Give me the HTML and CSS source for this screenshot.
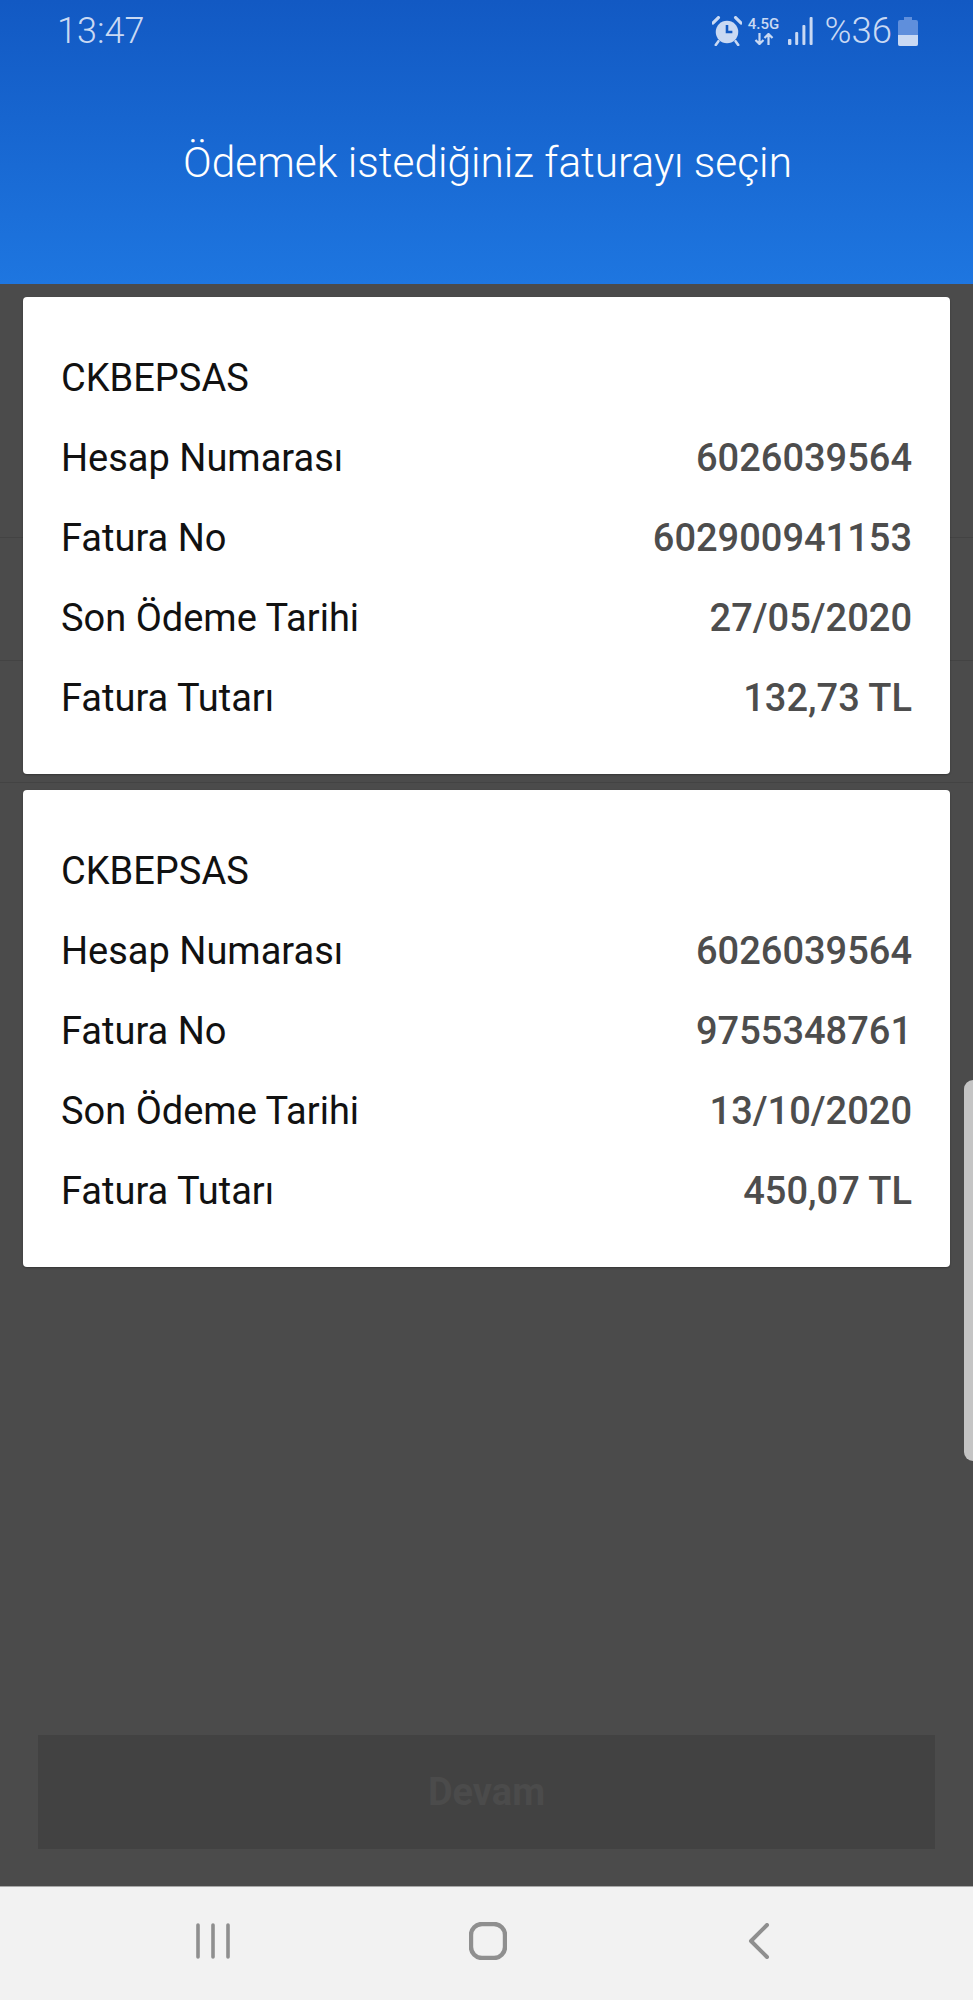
FILE: index.html
```html
<!DOCTYPE html>
<html lang="tr">
<head>
    <meta charset="UTF-8">
    <meta name="viewport" content="width=device-width, initial-scale=1.0">
    <title>Fatura Seçimi</title>
    <link rel="stylesheet" href="styles.css">
</head>
<body>
    <div class="screen">
        <header class="top-bar">
            <div class="status-bar">
                <span class="clock">13:47</span>
                <div class="status-icons">
                    <svg class="icon-alarm" width="30" height="30" viewBox="0 0 28 28">
                        <circle cx="14" cy="15" r="10.5" fill="#c9d9f3"/>
                        <path d="M14 8.5 V15 H19" fill="none" stroke="#1259c3" stroke-width="2.4"/>
                        <path d="M1 6.5 L6 1.5 M27 6.5 L22 1.5" stroke="#c9d9f3" stroke-width="3" stroke-linecap="round"/>
                        <path d="M6 23.5 L3.5 27 M22 23.5 L24.5 27" stroke="#c9d9f3" stroke-width="2.4" stroke-linecap="round"/>
                    </svg>
                    <div class="network">
                        <span class="network-label">4.5G</span>
                        <svg width="20" height="12" viewBox="0 0 20 12">
                            <path d="M5.5 0 V11 M1.5 7 L5.5 11 L9.5 7 M14.5 12 V1 M10.5 5 L14.5 1 L18.5 5" fill="none" stroke="#c9d9f3" stroke-width="2.2"/>
                        </svg>
                    </div>
                    <svg class="icon-signal" width="25" height="28" viewBox="0 0 25 28">
                        <rect x="0" y="22" width="3.4" height="6" rx="1" fill="#c9d9f3"/>
                        <rect x="7.2" y="15" width="3" height="13" rx="1" fill="#c9d9f3"/>
                        <rect x="14.4" y="8" width="3" height="20" rx="1" fill="#c9d9f3"/>
                        <rect x="21.6" y="0" width="3" height="28" rx="1" fill="#c9d9f3"/>
                    </svg>
                    <span class="battery-text">%36</span>
                    <svg class="icon-battery" width="20" height="29" viewBox="0 0 20 29">
                        <path d="M6 0 H14 V3 H18 Q20 3 20 5 V27 Q20 29 18 29 H2 Q0 29 0 27 V5 Q0 3 2 3 H6 Z" fill="#5f8fdc"/>
                        <path d="M0 18 H20 V27 Q20 29 18 29 H2 Q0 29 0 27 Z" fill="#c9d9f3"/>
                    </svg>
                </div>
            </div>
            <h1 class="page-title">Ödemek istediğiniz faturayı seçin</h1>
        </header>

        <main class="content">
            <div class="invoice-list">
                <section class="invoice-card">
                    <div class="invoice-row">CKBEPSAS</div>
                    <div class="invoice-row"><span>Hesap Numarası</span><span class="value">6026039564</span></div>
                    <div class="invoice-row"><span>Fatura No</span><span class="value">602900941153</span></div>
                    <div class="invoice-row"><span>Son Ödeme Tarihi</span><span class="value">27/05/2020</span></div>
                    <div class="invoice-row"><span>Fatura Tutarı</span><span class="value">132,73 TL</span></div>
                </section>
                <section class="invoice-card">
                    <div class="invoice-row">CKBEPSAS</div>
                    <div class="invoice-row"><span>Hesap Numarası</span><span class="value">6026039564</span></div>
                    <div class="invoice-row"><span>Fatura No</span><span class="value">9755348761</span></div>
                    <div class="invoice-row"><span>Son Ödeme Tarihi</span><span class="value">13/10/2020</span></div>
                    <div class="invoice-row"><span>Fatura Tutarı</span><span class="value">450,07 TL</span></div>
                </section>
            </div>
            <button class="continue-button" disabled>Devam</button>
            <div class="scroll-handle"></div>
        </main>

        <nav class="nav-bar">
            <svg width="34" height="36" viewBox="0 0 34 36">
                <path d="M2 2 V34 M17 2 V34 M32 2 V34" fill="none" stroke="#8f8f8f" stroke-width="3.6" stroke-linecap="round"/>
            </svg>
            <svg width="38" height="38" viewBox="0 0 38 38">
                <rect x="2" y="2" width="34" height="34" rx="11" fill="none" stroke="#8f8f8f" stroke-width="4.4"/>
            </svg>
            <svg width="24" height="36" viewBox="0 0 24 36">
                <path d="M21 2 L5 18 L21 34" fill="none" stroke="#8f8f8f" stroke-width="4" stroke-linecap="round" stroke-linejoin="round"/>
            </svg>
        </nav>
    </div>
</body>
</html>
```

FILE: styles.css
```css
* {
    box-sizing: border-box;
}
body {
    margin: 0;
    font-family: Roboto, "Liberation Sans", sans-serif;
}
.screen {
    display: flex;
    flex-direction: column;
    width: 973px;
    height: 2000px;
    overflow: hidden;
    background: #4b4b4b;
}
.top-bar {
    height: 284px;
    padding: 10px 55px 0 57px;
    background: linear-gradient(#1259c3, #1e76e0);
}
.status-bar {
    display: flex;
    justify-content: space-between;
    align-items: center;
    height: 42px;
    color: #c9d9f3;
}
.clock {
    font-size: 36px;
    font-weight: 300;
}
.status-icons {
    display: flex;
    align-items: center;
    gap: 6px;
}
.network {
    display: flex;
    flex-direction: column;
    align-items: center;
    gap: 3px;
    width: 32px;
}
.network-label {
    font-size: 15px;
    line-height: 12px;
    font-weight: 500;
}
.icon-signal {
    margin: 0 6px 0 2px;
}
.battery-text {
    font-size: 36.5px;
    font-weight: 300;
    line-height: 42px;
}
.page-title {
    margin: 83px 0 0;
    color: #fff;
    font-size: 42.4px;
    font-weight: 300;
    line-height: 56px;
    text-align: center;
}
.content {
    position: relative;
    flex: 1;
    display: flex;
    flex-direction: column;
    justify-content: space-between;
    padding: 13px 0 37px;
    background:
        linear-gradient(#434343, #434343) 0 253px / 100% 1px no-repeat,
        linear-gradient(#434343, #434343) 0 376px / 100% 1px no-repeat,
        linear-gradient(#434343, #434343) 0 498px / 100% 1px no-repeat;
}
.invoice-list {
    display: flex;
    flex-direction: column;
    gap: 16px;
    padding: 0 23px;
}
.invoice-card {
    height: 477px;
    padding: 41px 38px 36px 38px;
    background: #fff;
    border-radius: 4px;
    box-shadow: 0 1px 2px rgba(0, 0, 0, 0.3);
}
.invoice-row {
    display: flex;
    justify-content: space-between;
    align-items: center;
    height: 80px;
    color: #111;
    font-size: 38px;
}
.value {
    color: #4d4d4d;
    font-weight: 500;
}
.continue-button {
    align-self: center;
    width: 897px;
    height: 114px;
    border: none;
    background: #424242;
    color: #4b4b4b;
    font-family: inherit;
    font-size: 38px;
    font-weight: 700;
}
.scroll-handle {
    position: absolute;
    right: 0;
    top: 796px;
    width: 9px;
    height: 381px;
    background: #c4c4c4;
    border-radius: 9px 0 0 9px;
}
.nav-bar {
    display: flex;
    justify-content: space-between;
    align-items: center;
    height: 114px;
    padding: 0 203px 6px 196px;
    background: #f2f2f2;
    border-top: 1px solid #a8a8a8;
}
```
